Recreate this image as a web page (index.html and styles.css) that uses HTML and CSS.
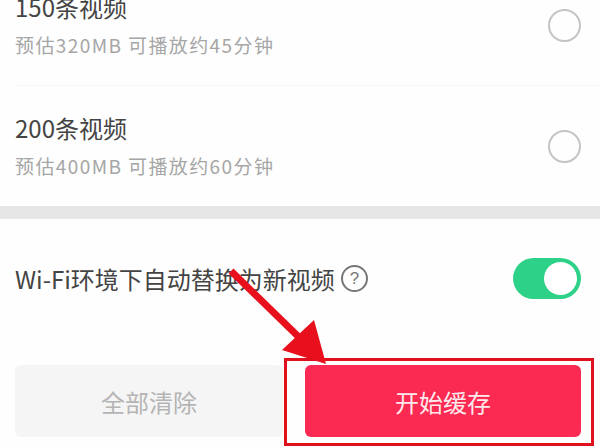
FILE: index.html
```html
<!DOCTYPE html>
<html>
	<head>
		<title>缓存设置</title>
		<link rel="stylesheet" href="styles.css">
	</head>
	<body>
		<div class="page">
			<div class="option option-first">
				<div class="option-text">
					<p class="option-title">150条视频</p>
					<p class="option-info">预估320MB 可播放约45分钟</p>
				</div>
				<span class="radio"></span>
			</div>
			<div class="option">
				<div class="option-text">
					<p class="option-title">200条视频</p>
					<p class="option-info">预估400MB 可播放约60分钟</p>
				</div>
				<span class="radio"></span>
			</div>
			<div class="band"></div>
			<div class="wifi-row">
				<p class="wifi-label">Wi-Fi环境下自动替换为新视频</p>
				<span class="help">?</span>
				<span class="switch"><span class="switch-knob"></span></span>
			</div>
			<div class="buttons">
				<button class="clear-button">全部清除</button>
				<button class="start-button">开始缓存</button>
			</div>
			<div class="highlight"></div>
			<svg class="arrow" width="130" height="110" viewBox="0 0 130 110">
				<path d="M7 5 L84 80" stroke="#e8101c" stroke-width="7" fill="none"/>
				<path d="M102 98 L90 54 L58 84 Z" fill="#e8101c"/>
			</svg>
		</div>
	</body>
</html>
```

FILE: styles.css
```css
*{
	box-sizing: border-box;
}
body{
	margin: 0;
	background-color: white;
	font-family: "Noto Sans CJK SC", "Liberation Sans", sans-serif;
}
p{
	margin: 0;
}
.page{
	position: relative;
	width: 600px;
	height: 448px;
	overflow: hidden;
	background-color: #fefefe;
}
.option{
	display: flex;
	align-items: center;
	justify-content: space-between;
	height: 120px;
	margin-left: 15px;
	padding-right: 19px;
	border-bottom: 1px solid #f6f6f6;
}
.option-first{
	margin-top: -34px;
}
.option:nth-child(2){
	border-bottom: none;
}
.option-title{
	color: #444444;
	font-size: 24px;
	line-height: 36px;
	margin-top: -3px;
}
.option-info{
	margin-top: 6px;
	color: #a6a6a6;
	font-size: 19px;
	letter-spacing: 1.4px;
	line-height: 28px;
}
.radio{
	width: 33px;
	height: 33px;
	border: 2px solid #c4c4c4;
	border-radius: 50%;
}
.band{
	height: 13px;
	margin-top: 0;
	background-color: #e6e6e6;
}
.wifi-row{
	display: flex;
	align-items: center;
	height: 41px;
	margin-top: 39px;
	padding: 0 19px 0 15px;
}
.wifi-label{
	color: #444444;
	font-size: 24px;
}
.help{
	display: flex;
	align-items: center;
	justify-content: center;
	width: 27px;
	height: 27px;
	margin-left: 6px;
	border: 2px solid #777777;
	border-radius: 50%;
	color: #777777;
	font-size: 17px;
	font-family: "Liberation Sans", sans-serif;
}
.switch{
	display: flex;
	justify-content: flex-end;
	width: 68px;
	height: 41px;
	margin-left: auto;
	padding: 4px;
	border-radius: 21px;
	background-color: #2dd188;
}
.switch-knob{
	width: 33px;
	height: 33px;
	border-radius: 50%;
	background-color: white;
}
.buttons{
	display: flex;
	gap: 22px;
	margin-top: 66px;
	padding: 0 19px 0 15px;
}
.clear-button{
	width: 268px;
	height: 72px;
	border: none;
	border-radius: 6px;
	background-color: #f5f5f5;
	color: #b4b4b4;
	font-size: 24px;
	font-family: inherit;
}
.start-button{
	width: 276px;
	height: 72px;
	border: none;
	border-radius: 6px;
	background-color: #fb2a52;
	color: #ffe9ec;
	font-size: 24px;
	font-family: inherit;
}
.highlight{
	position: absolute;
	left: 284px;
	top: 358px;
	width: 310px;
	height: 88px;
	border: 3px solid #e0101c;
}
.arrow{
	position: absolute;
	left: 224px;
	top: 266px;
}
```
